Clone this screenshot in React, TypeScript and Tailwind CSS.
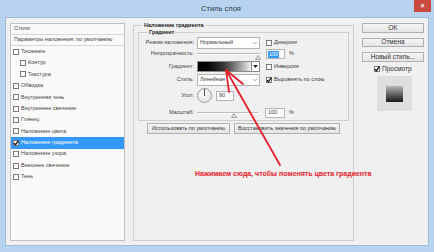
import React from "react";
import { ChevronDown } from "lucide-react";

function Check({ on = false }: { on?: boolean }) {
  return (
    <span className="w-[6px] h-[6px] border border-[#7a7a7a] bg-white shrink-0 relative">
      {on && (
        <svg viewBox="0 0 6 6" className="absolute -left-[1px] -top-[1px] w-[6px] h-[6px] overflow-visible">
          <path d="M1 3.2 L2.5 4.8 L5.3 0.6" fill="none" stroke="#111" strokeWidth="1.3" />
        </svg>
      )}
    </span>
  );
}

const items = [
  { label: "Тиснение" },
  { label: "Контур", indent: true },
  { label: "Текстура", indent: true },
  { label: "Обводка" },
  { label: "Внутренняя тень" },
  { label: "Внутреннее свечение" },
  { label: "Глянец" },
  { label: "Наложение цвета" },
  { label: "Наложение градиента", on: true, active: true },
  { label: "Наложение узора" },
  { label: "Внешнее свечение" },
  { label: "Тень" },
];

function Label({ children }: { children: React.ReactNode }) {
  return <span className="w-[56px] text-right pr-[1px] shrink-0 text-[#444]">{children}</span>;
}

function Select({ value }: { value: string }) {
  return (
    <div className="ml-[2px] w-[63px] h-full bg-white border border-[#b4b4b4] flex items-center justify-between pl-[2px] pr-[1px]">
      <span>{value}</span>
      <ChevronDown className="w-[6px] h-[6px] text-[#666]" strokeWidth={2.5} />
    </div>
  );
}

function Slider({ w, thumb }: { w: string; thumb: number }) {
  return (
    <div className={`ml-[2px] ${w} h-full relative flex items-center`}>
      <div className="w-full h-[2px] bg-[#bcbcbc] border-b border-white" />
      <svg viewBox="0 0 6 5" className="absolute w-[6px] h-[5px] top-[55%]" style={{ left: thumb }}>
        <path d="M3 0.5 L5.5 4.5 L0.5 4.5 Z" fill="#f4f4f4" stroke="#8a8a8a" strokeWidth="0.8" />
      </svg>
    </div>
  );
}

function Btn({ children, className = "" }: { children: React.ReactNode; className?: string }) {
  return (
    <div className={`flex items-center justify-center border border-[#b0b0b0] bg-gradient-to-b from-[#f6f6f6] to-[#e4e4e4] text-[#333] ${className}`}>
      {children}
    </div>
  );
}

export default function App() {
  return (
    <div className="w-[434px] h-[252px] bg-[#b7d3ef] flex flex-col overflow-hidden relative font-['Liberation_Sans',Arial,sans-serif]">
      {/* title bar */}
      <div className="h-[17px] shrink-0 relative flex items-center justify-center">
        <span className="text-[7.5px] text-[#2a3a4a] pl-[8px]">Стиль слоя</span>
        <div className="absolute right-[3px] top-0 w-[17px] h-[12px] bg-[#c9493f] flex items-center justify-center text-white text-[7px] font-bold">
          ×
        </div>
      </div>

      <div className="flex-1 mx-[5px] mb-[6px] bg-[#f0f0f0] border border-[#9fbcd9] flex pt-[5px] pl-[4px] pb-[4px] text-[5.5px] leading-none text-[#3a3a3a]">
        {/* styles list */}
        <div className="w-[115px] h-[218px] border border-[#c2c2c2] bg-[#fafafa] flex flex-col text-[#444]">
          <div className="h-[11px] border-b border-[#d6d6d6] flex items-center pl-[3px]">Стили</div>
          <div className="h-[11px] border-b border-[#d6d6d6] flex items-center pl-[3px]">Параметры наложения: по умолчанию</div>
          {items.map((it) => (
            <div
              key={it.label}
              className={`h-[11.4px] flex items-center gap-[2px] ${it.indent ? "pl-[9px]" : "pl-[2px]"} ${it.active ? "bg-[#3399ff] text-white" : ""}`}
            >
              <Check on={it.on} />
              <span>{it.label}</span>
            </div>
          ))}
        </div>

        {/* gradient overlay group */}
        <div className="ml-[8px] mt-[2px] w-[221px] h-[216px] border border-[#cfcfcf] flex flex-col">
          <div className="-mt-[4px] ml-[8px] px-[2px] w-fit bg-[#f0f0f0] font-bold leading-[7px] text-[#222]">Наложение градиента</div>
          <div className="mt-[3px] mx-[4px] border border-[#cfcfcf] flex flex-col pb-[2px]">
            <div className="-mt-[4px] ml-[9px] px-[1px] w-fit bg-[#f0f0f0] font-bold leading-[7px] text-[#222]">Градиент</div>
            <div className="mt-[1px] h-[12px] flex items-center">
              <Label>Режим наложения:</Label>
              <Select value="Нормальный" />
              <div className="ml-[6px] flex items-center gap-[2px]"><Check /><span>Дизеринг</span></div>
            </div>
            <div className="h-[10px] flex items-center">
              <Label>Непрозрачность:</Label>
              <Slider w="w-[63px]" thumb={58} />
              <div className="ml-[6px] w-[19px] h-full bg-white border border-[#b4b4b4] flex items-center pl-[1px]">
                <span className="bg-[#3399ff] text-white px-[1px] leading-[7px]">100</span>
              </div>
              <span className="ml-[4px]">%</span>
            </div>
            <div className="mt-[2px] h-[11px] flex items-center">
              <Label>Градиент:</Label>
              <div className="ml-[2px] w-[63px] h-full border border-[#8a8a8a] flex">
                <div className="flex-1 bg-gradient-to-r from-black via-[#3a3a3a] to-[#f0f0f0]" />
                <div className="w-[8px] bg-white border-l border-[#8a8a8a] flex items-center justify-center">
                  <svg viewBox="0 0 6 4" className="w-[5px] h-[3px]"><path d="M0 0 H6 L3 4 Z" fill="#111" /></svg>
                </div>
              </div>
              <div className="ml-[6px] flex items-center gap-[2px]"><Check /><span>Инверсия</span></div>
            </div>
            <div className="mt-[2px] h-[12px] flex items-center">
              <Label>Стиль:</Label>
              <Select value="Линейная" />
              <div className="ml-[6px] flex items-center gap-[2px]"><Check on /><span>Выровнять по слою</span></div>
            </div>
            <div className="mt-[2px] h-[15px] flex items-center">
              <Label>Угол:</Label>
              <div className="ml-[2px] w-[15px] h-[15px] rounded-full border border-[#9a9a9a] bg-[radial-gradient(circle_at_40%_35%,#ffffff,#dcdcdc)] flex justify-center">
                <div className="w-[1px] h-[7px] bg-[#555]" />
              </div>
              <div className="ml-[4px] w-[18px] h-[10px] bg-white border border-[#b4b4b4] flex items-center pl-[2px]">90</div>
            </div>
            <div className="mt-[4px] h-[11px] flex items-center">
              <Label>Масштаб:</Label>
              <Slider w="w-[61px]" thumb={34} />
              <div className="ml-[7px] w-[20px] h-[10px] bg-white border border-[#b4b4b4] flex items-center pl-[2px]">100</div>
              <span className="ml-[4px]">%</span>
            </div>
          </div>
          <div className="mt-[2px] h-[11px] pl-[13px] flex gap-[4px]">
            <Btn className="w-[83px]">Использовать по умолчанию</Btn>
            <Btn className="w-[106px]">Восстановить значения по умолчанию</Btn>
          </div>
        </div>

        {/* buttons column */}
        <div className="ml-[8px] w-[62px] flex flex-col text-[6.5px]">
          <Btn className="h-[10px] border-[#3c7fb1]">OK</Btn>
          <Btn className="mt-[5px] h-[9px]">Отмена</Btn>
          <Btn className="mt-[5px] h-[10px]">Новый стиль...</Btn>
          <div className="mt-[3px] h-[8px] pl-[12px] flex items-center gap-[2px] text-[#333]">
            <Check on />
            <span>Просмотр</span>
          </div>
          <div className="mt-[3px] ml-[15px] w-[35px] h-[35px] bg-[#dedede] flex items-center justify-center">
            <div className="w-[17px] h-[16px] bg-gradient-to-b from-[#b8b8b8] to-[#1c1c1c]" />
          </div>
        </div>
      </div>

      {/* annotation */}
      <svg className="absolute left-0 top-0 w-[434px] h-[252px] pointer-events-none" viewBox="0 0 434 252">
        <g stroke="#e5202b" strokeWidth="1.8" fill="none" strokeLinecap="round">
          <path d="M280 165 L226 70" />
          <path d="M226 70 L229 92" />
          <path d="M226 70 L243 84" />
        </g>
      </svg>
      <div className="absolute left-[195px] top-[170px] text-[7px] font-bold text-[#e5202b] whitespace-nowrap leading-none">
        Нажимаем сюда, чтобы поменять цвета градиента
      </div>
    </div>
  );
}
